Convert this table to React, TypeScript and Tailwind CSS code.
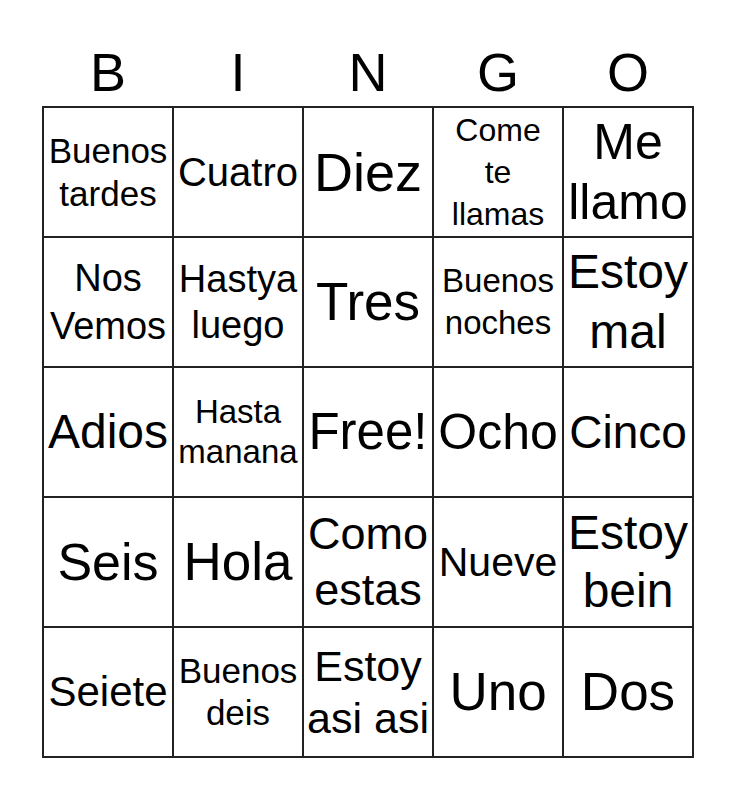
import React from 'react';

type Cell = { lines: string[]; cls: string };

const letters = ['B', 'I', 'N', 'G', 'O'];

// each cell keeps its own fitted size, like the printed card
const cells: Cell[] = [
  { lines: ['Buenos', 'tardes'], cls: 'text-[35px] leading-[43px]' },
  { lines: ['Cuatro'], cls: 'text-[40px] leading-[48px]' },
  { lines: ['Diez'], cls: 'text-[54px] leading-[62px]' },
  { lines: ['Come', 'te', 'llamas'], cls: 'text-[32px] leading-[42px]' },
  { lines: ['Me', 'llamo'], cls: 'text-[50px] leading-[60px]' },

  { lines: ['Nos', 'Vemos'], cls: 'text-[38px] leading-[48px]' },
  { lines: ['Hastya', 'luego'], cls: 'text-[38px] leading-[46px]' },
  { lines: ['Tres'], cls: 'text-[53px] leading-[62px]' },
  { lines: ['Buenos', 'noches'], cls: 'text-[33px] leading-[42px]' },
  { lines: ['Estoy', 'mal'], cls: 'text-[48px] leading-[60px]' },

  { lines: ['Adios'], cls: 'text-[48px] leading-[56px]' },
  { lines: ['Hasta', 'manana'], cls: 'text-[33px] leading-[40px]' },
  { lines: ['Free!'], cls: 'text-[51px] leading-[60px]' },
  { lines: ['Ocho'], cls: 'text-[50px] leading-[58px]' },
  { lines: ['Cinco'], cls: 'text-[46px] leading-[54px]' },

  { lines: ['Seis'], cls: 'text-[52px] leading-[60px]' },
  { lines: ['Hola'], cls: 'text-[53px] leading-[62px]' },
  { lines: ['Como', 'estas'], cls: 'text-[45px] leading-[56px]' },
  { lines: ['Nueve'], cls: 'text-[41px] leading-[48px]' },
  { lines: ['Estoy', 'bein'], cls: 'text-[48px] leading-[58px]' },

  { lines: ['Seiete'], cls: 'text-[42px] leading-[50px]' },
  { lines: ['Buenos', 'deis'], cls: 'text-[35px] leading-[42px]' },
  { lines: ['Estoy', 'asi asi'], cls: 'text-[43px] leading-[52px]' },
  { lines: ['Uno'], cls: 'text-[53px] leading-[62px]' },
  { lines: ['Dos'], cls: 'text-[53px] leading-[62px]' },
];

export default function App() {
  return (
    <div className="min-h-[800px] w-[736px] bg-white text-black font-['Liberation_Sans',Arial,sans-serif]">
      <div className="mx-auto w-[652px]">
        {/* header letters */}
        <div className="grid grid-cols-[repeat(5,128px)] gap-[2px] px-[2px] pt-[45px] pb-[7px]">
          {letters.map((l) => (
            <div key={l} className="text-center text-[54px] leading-none">
              {l}
            </div>
          ))}
        </div>

        {/* card grid */}
        <div className="grid grid-cols-[repeat(5,128px)] grid-rows-[repeat(5,128px)] gap-[2px] p-[2px] bg-[#222]">
          {cells.map((c, i) => (
            <div key={i} className={`flex flex-col items-center justify-center bg-white text-center whitespace-nowrap ${c.cls}`}>
              {c.lines.map((line, j) => (
                <span key={j}>{line}</span>
              ))}
            </div>
          ))}
        </div>
      </div>
    </div>
  );
}
